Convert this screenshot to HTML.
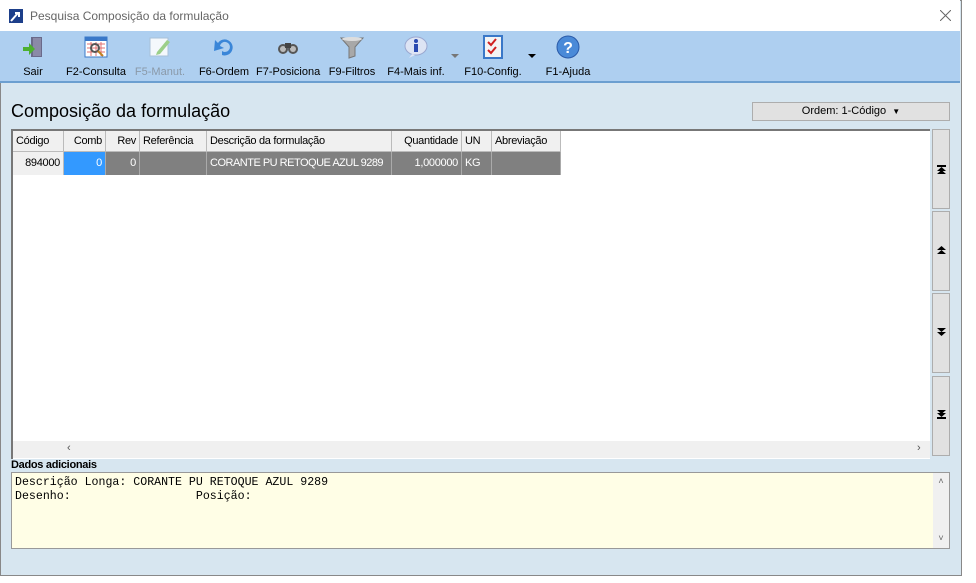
<!DOCTYPE html>
<html><head><meta charset="utf-8"><style>
*{box-sizing:border-box;margin:0;padding:0}
body{width:976px;height:583px;background:#fff;font-family:"Liberation Sans",sans-serif;font-size:11px;color:#000;position:relative;overflow:hidden}
.abs{position:absolute}
#win{left:0;top:0;width:962px;height:576px;border:1px solid #888;background:#d7e6f0}
#title{left:0;top:0;width:960px;height:31px;background:#fff}
#tb{left:0;top:31px;width:960px;height:52px;background:#aecff0;border-bottom:2px solid #6c9fd0}
.btn{position:absolute;top:0;height:50px;text-align:center;font-size:11px}
.btn .lbl{position:absolute;top:35px;left:0;right:0;white-space:nowrap}
.btn svg{position:absolute;top:4px}
.hdr div,.row div{position:absolute;top:0;height:100%;padding:0 3px;white-space:nowrap;overflow:hidden;letter-spacing:-0.3px}
.hdr div{background:#f0f0f0;border-right:1px solid #bbb;border-bottom:1px solid #bbb;line-height:20px}
.row div{line-height:22px;color:#fff;background:#808080;border-right:1px solid #aaa}
.r{text-align:right}
.side{position:absolute;left:932px;width:18px;background:#e1e1e1;border:1px solid #adadad}
</style></head><body>
<div id="win" class="abs"></div>
<div id="title" class="abs">
 <svg class="abs" style="left:9px;top:9px" width="14" height="14"><rect width="14" height="14" fill="#1d3f8a"/><path d="M2 12 L9 4 M6 4 H10 V8" stroke="#fff" stroke-width="2" fill="none"/></svg>
 <div class="abs" style="left:30px;top:9px;font-size:12px;color:#666">Pesquisa Composição da formulação</div>
 <svg class="abs" style="left:940px;top:10px" width="11" height="11"><path d="M0 0L11 11M11 0L0 11" stroke="#666" stroke-width="1"/></svg>
</div>
<div id="tb" class="abs">
 <div class="btn" style="left:13px;width:40px"><svg style="left:8px" width="24" height="24"><rect x="10" y="2" width="11" height="20" fill="#6a6a8a"/><rect x="12" y="3" width="8" height="18" fill="#8a8aa8"/><path d="M2 12h6v-4l6 6-6 6v-4H2z" fill="#4cb030"/></svg><div class="lbl">Sair</div></div>
 <div class="btn" style="left:64px;width:64px"><svg style="left:20px" width="24" height="24"><rect x="1" y="2" width="22" height="20" fill="#fff" stroke="#3a78c8"/><rect x="1" y="2" width="22" height="4" fill="#3a78c8"/><path d="M3 9h18M3 13h18M3 17h18M7 7v14M12 7v14M17 7v14" stroke="#e07070"/><circle cx="11" cy="13" r="4" fill="none" stroke="#555" stroke-width="2"/><path d="M14 16l5 5" stroke="#c08020" stroke-width="2"/></svg><div class="lbl">F2-Consulta</div></div>
 <div class="btn" style="left:130px;width:60px;color:#8a99a8"><svg style="left:18px" width="24" height="24"><rect x="2" y="3" width="18" height="18" fill="#f4f8fc" stroke="#a8c0d8"/><path d="M9 17l10-12 3 2-10 12-4 1z" fill="#9ccf8a"/></svg><div class="lbl">F5-Manut.</div></div>
 <div class="btn" style="left:196px;width:56px"><svg style="left:16px" width="24" height="24"><path d="M6 8 A8 8 0 1 1 10 20 L10 16 A5 5 0 1 0 8 11 L12 13 L2 16 L3 5z" fill="#3a86d8"/></svg><div class="lbl">F6-Ordem</div></div>
 <div class="btn" style="left:256px;width:64px"><svg style="left:20px" width="24" height="24"><circle cx="7" cy="14" r="5" fill="#555"/><circle cx="17" cy="14" r="5" fill="#555"/><circle cx="7" cy="14" r="3" fill="#bbb"/><circle cx="17" cy="14" r="3" fill="#bbb"/><rect x="9" y="8" width="6" height="5" fill="#444"/></svg><div class="lbl">F7-Posiciona</div></div>
 <div class="btn" style="left:326px;width:52px"><svg style="left:14px" width="24" height="24"><path d="M1 3h22l-8 9v9l-6 2V12z" fill="#a8a8a8" stroke="#777"/><ellipse cx="12" cy="4" rx="10" ry="2" fill="#ddd"/></svg><div class="lbl">F9-Filtros</div></div>
 <div class="btn" style="left:384px;width:64px"><svg style="left:20px" width="24" height="24"><ellipse cx="12" cy="11" rx="11" ry="9" fill="#dde4f4" stroke="#9aa8d0"/><path d="M8 19l-3 4 6-3z" fill="#dde4f4"/><circle cx="12" cy="6" r="2" fill="#2a4ab0"/><rect x="10" y="9" width="4" height="8" fill="#2a4ab0"/></svg><div class="lbl">F4-Mais inf.</div></div>
 <svg class="abs" style="left:451px;top:23px" width="8" height="4"><path d="M0 0h8l-4 4z" fill="#777"/></svg>
 <div class="btn" style="left:460px;width:66px"><svg style="left:21px" width="24" height="24"><rect x="3" y="1" width="18" height="22" fill="#f4f4f4" stroke="#3a78c8" stroke-width="2"/><path d="M7 7l3 3 5-6M7 15l3 3 5-6" stroke="#d02020" stroke-width="2" fill="none"/></svg><div class="lbl">F10-Config.</div></div>
 <svg class="abs" style="left:528px;top:23px" width="8" height="4"><path d="M0 0h8l-4 4z" fill="#000"/></svg>
 <div class="btn" style="left:543px;width:50px"><svg style="left:13px" width="24" height="24"><circle cx="12" cy="12" r="11" fill="#4a8ad8" stroke="#2a5aa8"/><text x="12" y="18" font-size="16" font-weight="bold" fill="#fff" text-anchor="middle" font-family="Liberation Sans">?</text></svg><div class="lbl">F1-Ajuda</div></div>
</div>
<div class="abs" style="left:11px;top:101px;font-size:18px">Composição da formulação</div>
<div class="abs" style="left:752px;top:102px;width:198px;height:19px;background:#e1e1e1;border:1px solid #adadad;text-align:center;line-height:17px;font-size:11px">Ordem: 1-Código &nbsp;<span style="font-size:8px">▼</span></div>
<div class="abs" style="left:11px;top:129px;width:919px;height:330px;background:#fff;border-left:2px solid #777;border-top:2px solid #777"></div>
<div class="abs hdr" style="left:13px;top:131px;width:548px;height:21px">
 <div style="left:0;width:51px">Código</div><div class="r" style="left:51px;width:42px">Comb</div><div class="r" style="left:93px;width:34px">Rev</div><div style="left:127px;width:67px">Referência</div><div style="left:194px;width:185px">Descrição da formulação</div><div class="r" style="left:379px;width:70px">Quantidade</div><div style="left:449px;width:30px">UN</div><div style="left:479px;width:69px">Abreviação</div>
</div>
<div class="abs row" style="left:13px;top:152px;width:548px;height:23px">
 <div class="r" style="left:0;width:51px;background:#f0f0f0;color:#000;border-right:1px solid #bbb">894000</div><div class="r" style="left:51px;width:42px;background:#3399ff">0</div><div class="r" style="left:93px;width:34px">0</div><div style="left:127px;width:67px"></div><div style="left:194px;width:185px;letter-spacing:-0.5px">CORANTE PU RETOQUE AZUL 9289</div><div class="r" style="left:379px;width:70px">1,000000</div><div style="left:449px;width:30px">KG</div><div style="left:479px;width:69px"></div>
</div>
<div class="abs" style="left:13px;top:441px;width:917px;height:17px;background:#f0f0f0;font-size:11px;color:#555"><span class="abs" style="left:54px;top:1px">‹</span><span class="abs" style="left:904px;top:1px">›</span></div>
<div class="side" style="top:129px;height:80px"><svg class="abs" style="left:4px;top:35px" width="9" height="9"><rect width="9" height="2" fill="#000"/><path d="M4.5 2L0 6h9zM4.5 5L0 9h9z" fill="#000"/></svg></div>
<div class="side" style="top:211px;height:80px"><svg class="abs" style="left:4px;top:34px" width="9" height="8"><path d="M4.5 0L0 4h9zM4.5 4L0 8h9z" fill="#000"/></svg></div>
<div class="side" style="top:293px;height:80px"><svg class="abs" style="left:4px;top:34px" width="9" height="8"><path d="M0 0h9L4.5 4zM0 4h9L4.5 8z" fill="#000"/></svg></div>
<div class="side" style="top:376px;height:80px"><svg class="abs" style="left:4px;top:33px" width="9" height="9"><path d="M0 0h9L4.5 4zM0 3h9L4.5 7z" fill="#000"/><rect y="7" width="9" height="2" fill="#000"/></svg></div>
<div class="abs" style="left:11px;top:459px;font-size:11px;font-weight:bold;letter-spacing:-0.3px">Dados adicionais</div>
<div class="abs" style="left:11px;top:472px;width:939px;height:77px;background:#fffee6;border:1px solid #999;font-family:'Liberation Mono',monospace;font-size:11.6px;line-height:14px;padding:3px 3px;white-space:pre">Descrição Longa: CORANTE PU RETOQUE AZUL 9289
Desenho:                  Posição:</div>
<div class="abs" style="left:933px;top:473px;width:16px;height:75px;background:#f0f0f0;font-size:9px;color:#666;text-align:center"><div style="margin-top:3px">˄</div><div style="margin-top:47px">˅</div></div>
</body></html>
